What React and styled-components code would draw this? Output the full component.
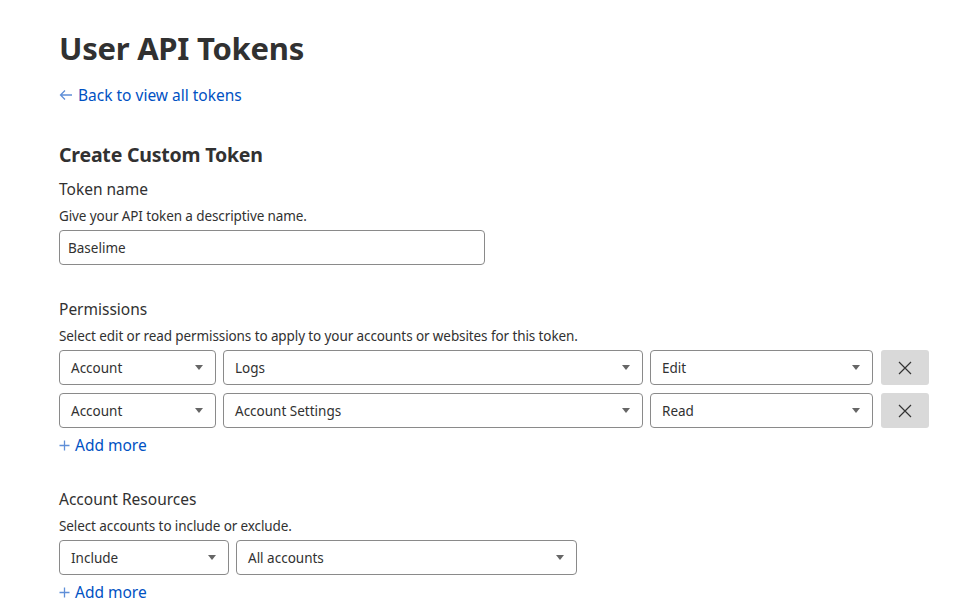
import React from "react";
import styled, { createGlobalStyle } from "styled-components";

const Global = createGlobalStyle`
  html, body { margin: 0; padding: 0; background: #fff; }
  body { font-family: "Noto Sans", "Open Sans", sans-serif; color: #313131; }
  * { box-sizing: border-box; }
`;

const Page = styled.div`
  padding: 26px 0 0 59px;
  width: 963px;
`;

const Title = styled.h1`
  margin: 0;
  font-size: 31px;
  line-height: 44px;
  font-weight: 700;
  color: #313131;
  letter-spacing: -0.25px;
`;

const Link = styled.a`
  display: inline-flex;
  align-items: center;
  gap: 5px;
  color: #0051c3;
  font-size: 15.5px;
  line-height: 22px;
  text-decoration: none;
  cursor: pointer;
  margin-top: ${(p) => p.$mt || 0}px;
  svg { color: #5f8fd8; }
`;

const SectionTitle = styled.h2`
  margin: 35px 0 0;
  font-size: 19.5px;
  line-height: 28px;
  font-weight: 700;
  letter-spacing: -0.2px;
`;

const Field = styled.section`
  display: flex;
  flex-direction: column;
  margin-top: ${(p) => p.$mt}px;
`;

const Label = styled.div`
  font-size: 15.5px;
  line-height: 22px;
  color: #313131;
`;

const Help = styled.div`
  font-size: 13.5px;
  line-height: 20px;
  color: #313131;
  margin-top: 6px;
  margin-bottom: 4px;
  letter-spacing: -0.1px;
`;

const TextInput = styled.div`
  width: 426px;
  height: 35px;
  border: 1px solid #8a8a8a;
  border-radius: 4px;
  padding: 0 8px;
  display: flex;
  align-items: center;
  font-size: 13.5px;
  color: #313131;
`;

const Rows = styled.div`
  display: flex;
  flex-direction: column;
  gap: 8px;
`;

const Row = styled.div`
  display: flex;
  gap: 7px;
  align-items: center;
`;

const Select = styled.div`
  width: ${(p) => p.$w}px;
  height: 35px;
  border: 1px solid #8a8a8a;
  border-radius: 4px;
  padding: 0 12px 0 11px;
  display: flex;
  align-items: center;
  justify-content: space-between;
  font-size: 13.5px;
  color: #313131;
`;

const Caret = styled.span`
  width: 0;
  height: 0;
  border-left: 4.5px solid transparent;
  border-right: 4.5px solid transparent;
  border-top: 5px solid #666;
`;

const RemoveButton = styled.button`
  width: 48px;
  height: 35px;
  margin-left: 1px;
  border: none;
  border-radius: 3px;
  background: #d9d9d9;
  display: flex;
  align-items: center;
  justify-content: center;
  padding: 0;
  color: #333;
`;

const XIcon = () => (
  <svg width="14" height="14" viewBox="0 0 14 14" fill="none" stroke="currentColor" strokeWidth="1.2">
    <path d="M1 1 L13 13 M13 1 L1 13" />
  </svg>
);

const ArrowLeft = () => (
  <svg width="14" height="12" viewBox="0 0 14 12" fill="none" stroke="currentColor" strokeWidth="1.3">
    <path d="M13 6 H1.5 M6 1.5 L1.5 6 L6 10.5" />
  </svg>
);

const Plus = () => (
  <svg width="11" height="11" viewBox="0 0 11 11" fill="none" stroke="currentColor" strokeWidth="1.3">
    <path d="M5.5 0.5 V10.5 M0.5 5.5 H10.5" />
  </svg>
);

const SelectBox = ({ w, children }) => (
  <Select $w={w}>
    <span>{children}</span>
    <Caret />
  </Select>
);

const permissions = [
  ["Account", "Logs", "Edit"],
  ["Account", "Account Settings", "Read"],
];

export default function App() {
  return (
    <>
      <Global />
      <Page>
        <Title>User API Tokens</Title>
        <div>
          <Link $mt={14}>
            <ArrowLeft />
            Back to view all tokens
          </Link>
        </div>
        <SectionTitle>Create Custom Token</SectionTitle>
        <Field $mt={9}>
          <Label>Token name</Label>
          <Help>Give your API token a descriptive name.</Help>
          <TextInput>Baselime</TextInput>
        </Field>
        <Field $mt={33}>
          <Label>Permissions</Label>
          <Help>Select edit or read permissions to apply to your accounts or websites for this token.</Help>
          <Rows>
            {permissions.map((r, i) => (
              <Row key={i}>
                <SelectBox w={157}>{r[0]}</SelectBox>
                <SelectBox w={420}>{r[1]}</SelectBox>
                <SelectBox w={223}>{r[2]}</SelectBox>
                <RemoveButton aria-label="Remove">
                  <XIcon />
                </RemoveButton>
              </Row>
            ))}
          </Rows>
          <div>
            <Link $mt={6}>
              <Plus />
              Add more
            </Link>
          </div>
        </Field>
        <Field $mt={32}>
          <Label>Account Resources</Label>
          <Help>Select accounts to include or exclude.</Help>
          <Row>
            <SelectBox w={170}>Include</SelectBox>
            <SelectBox w={341}>All accounts</SelectBox>
          </Row>
          <div>
            <Link $mt={6}>
              <Plus />
              Add more
            </Link>
          </div>
        </Field>
      </Page>
    </>
  );
}
